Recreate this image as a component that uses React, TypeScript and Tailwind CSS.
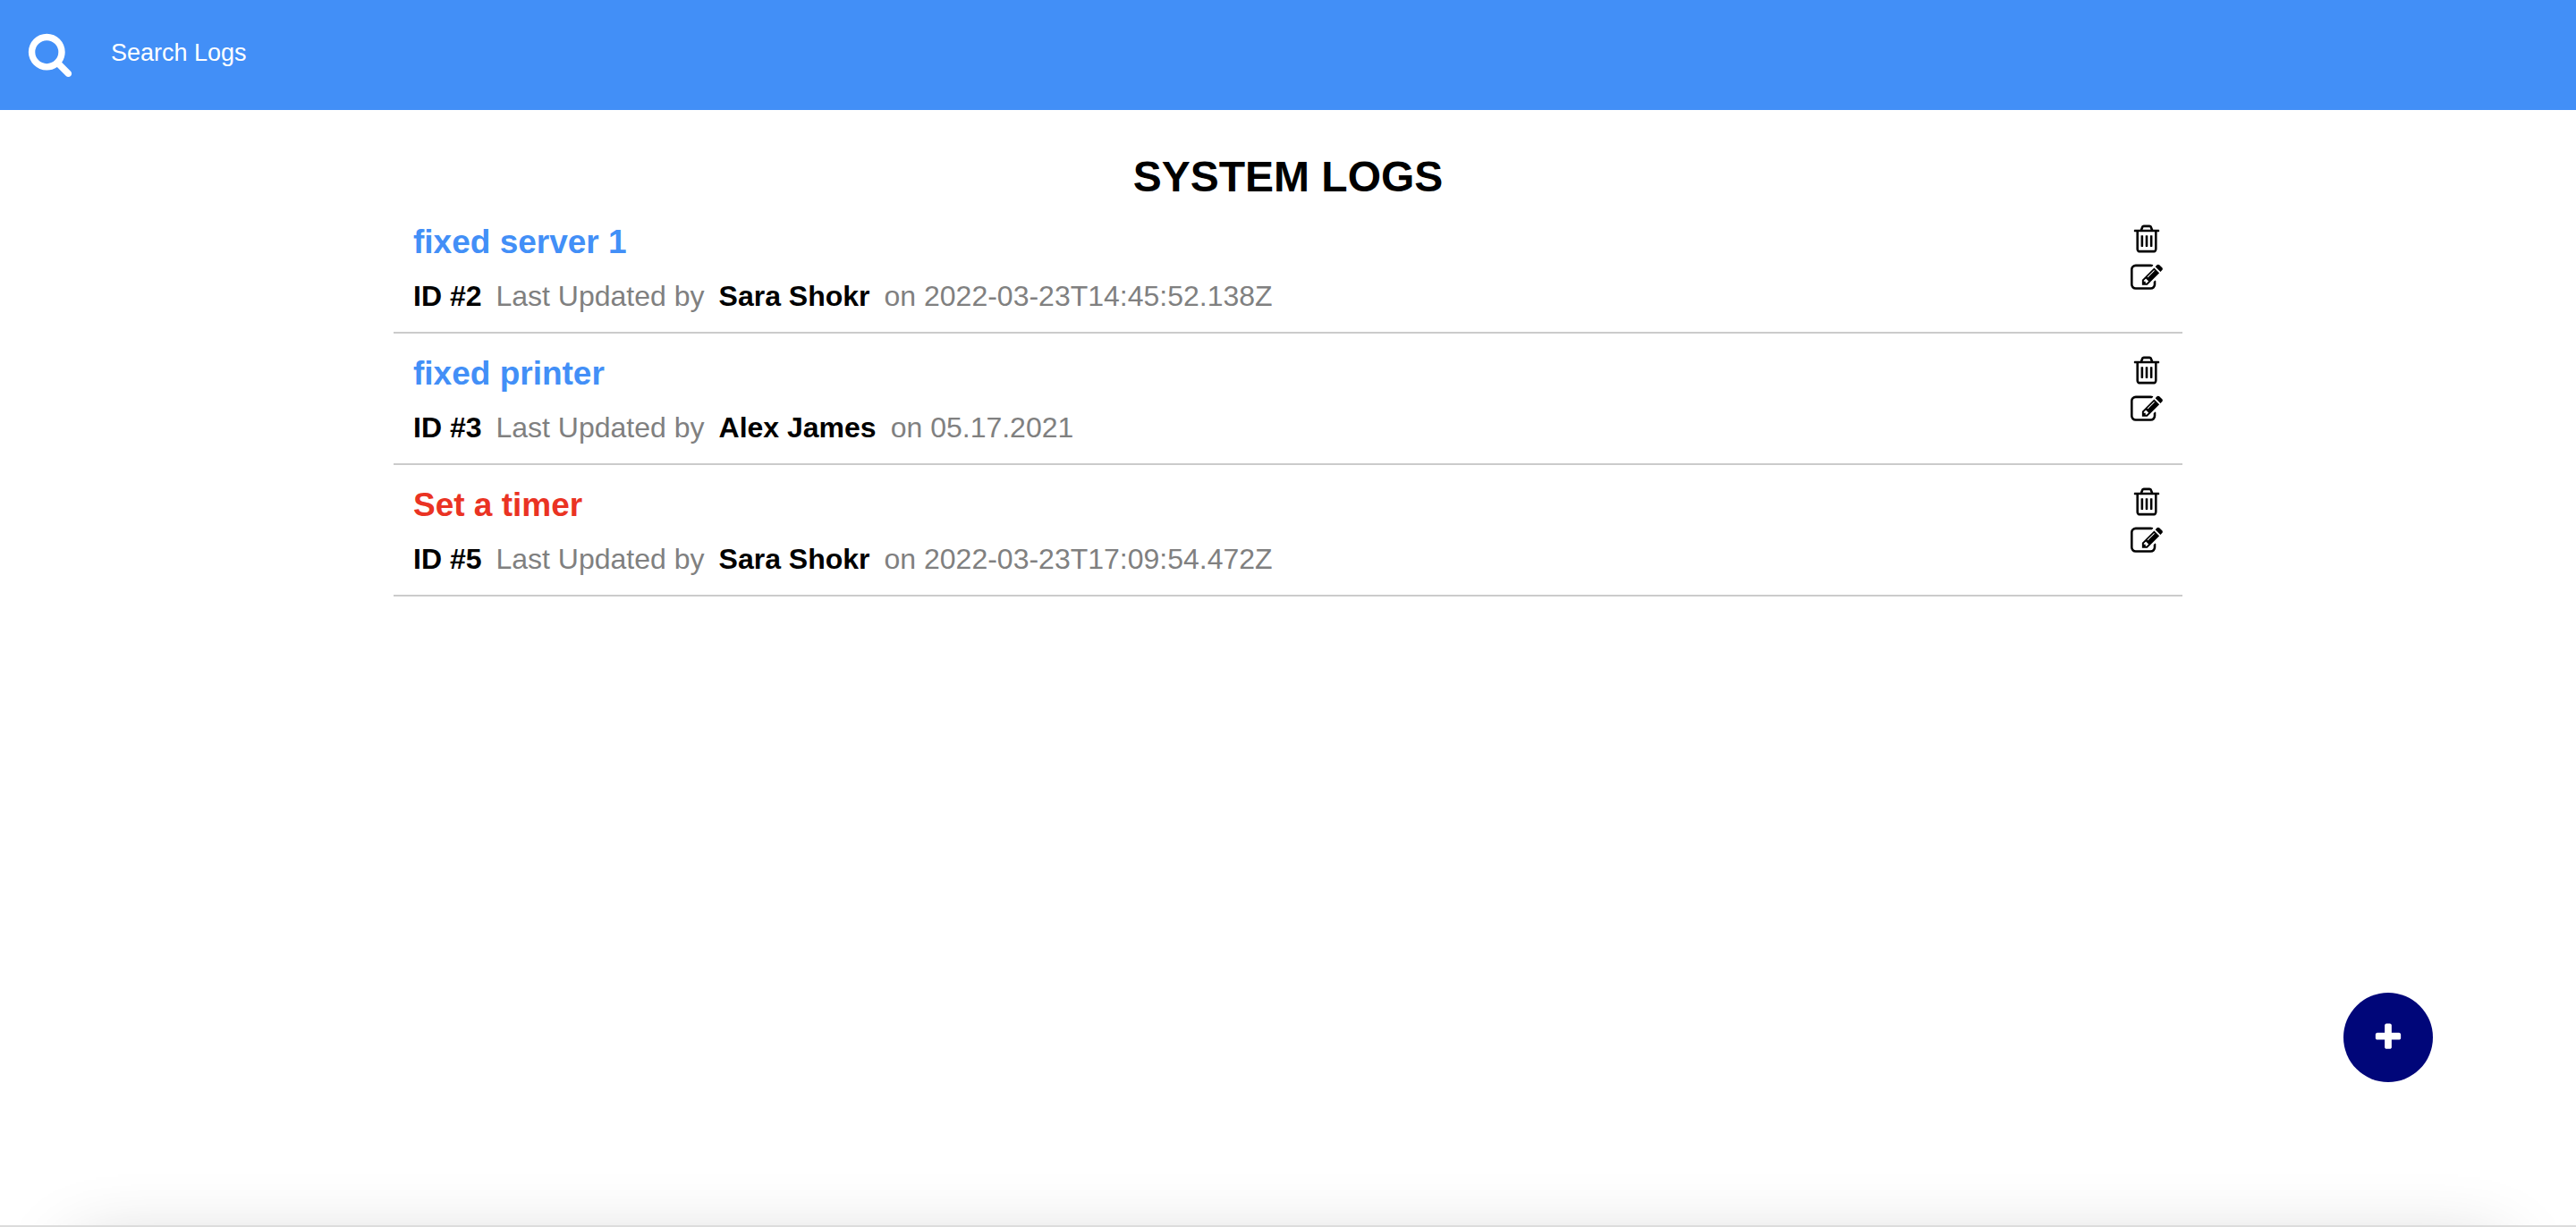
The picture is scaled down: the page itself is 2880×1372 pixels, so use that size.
type IconProps = { d: string; className: string };

const SEARCH =
  "M1216 832q0-185-131.5-316.5t-316.5-131.5-316.5 131.5-131.5 316.5 131.5 316.5 316.5 131.5 316.5-131.5 131.5-316.5zm512 832q0 52-38 90t-90 38q-54 0-90-38l-343-342q-179 124-399 124-143 0-273.5-55.5t-225-150-150-225-55.5-273.5 55.5-273.5 150-225 225-150 273.5-55.5 273.5 55.5 225 150 150 225 55.5 273.5q0 220-124 399l343 343q37 37 37 90z";
const TRASH =
  "M704 736v576q0 14-9 23t-23 9h-64q-14 0-23-9t-9-23v-576q0-14 9-23t23-9h64q14 0 23 9t9 23zm256 0v576q0 14-9 23t-23 9h-64q-14 0-23-9t-9-23v-576q0-14 9-23t23-9h64q14 0 23 9t9 23zm256 0v576q0 14-9 23t-23 9h-64q-14 0-23-9t-9-23v-576q0-14 9-23t23-9h64q14 0 23 9t9 23zm128 724v-948h-896v948q0 22 7 40.5t14.5 27 10.5 8.5h832q3 0 10.5-8.5t14.5-27 7-40.5zm-672-1076h448l-48-117q-7-9-17-11h-317q-10 2-17 11zm928 32v64q0 14-9 23t-23 9h-96v948q0 83-47 143.5t-113 60.5h-832q-66 0-113-58.5t-47-141.5v-952h-96q-14 0-23-9t-9-23v-64q0-14 9-23t23-9h309l70-167q15-37 54-63t79-26h320q40 0 79 26t54 63l70 167h309q14 0 23 9t9 23z";
const EDIT =
  "M888 1184l116-116-152-152-116 116v56h96v96h56zm440-720q-16-16-33 1l-350 350q-17 17-1 33t33-1l350-350q17-17 1-33zm80 594v190q0 119-84.5 203.5t-203.5 84.5h-832q-119 0-203.5-84.5t-84.5-203.5v-832q0-119 84.5-203.5t203.5-84.5h832q63 0 117 25 15 7 18 23 3 17-9 29l-49 49q-14 14-32 8-23-6-45-6h-832q-66 0-113 47t-47 113v832q0 66 47 113t113 47h832q66 0 113-47t47-113v-126q0-13 9-22l64-64q15-15 35-7t20 29zm-96-738l288 288-672 672h-288v-288zm444 132l-92 92-288-288 92-92q28-28 68-28t68 28l152 152q28 28 28 68t-28 68z";
const PLUS =
  "M1600 736v192q0 40-28 68t-68 28h-416v416q0 40-28 68t-68 28h-192q-40 0-68-28t-28-68v-416h-416q-40 0-68-28t-28-68v-192q0-40 28-68t68-28h416v-416q0-40 28-68t68-28h192q40 0 68 28t28 68v416h416q40 0 68 28t28 68z";

function Icon({ d, className }: IconProps) {
  return (
    <svg viewBox="0 0 1792 1792" fill="currentColor" aria-hidden="true" className={className}>
      <path d={d} />
    </svg>
  );
}

type Log = { id: number; message: string; tech: string; date: string; attention: boolean };

const logs: Log[] = [
  { id: 2, message: "fixed server 1", tech: "Sara Shokr", date: "2022-03-23T14:45:52.138Z", attention: false },
  { id: 3, message: "fixed printer", tech: "Alex James", date: "05.17.2021", attention: false },
  { id: 5, message: "Set a timer", tech: "Sara Shokr", date: "2022-03-23T17:09:54.472Z", attention: true },
];

function LogItem({ log }: { log: Log }) {
  return (
    <li className="flex items-start justify-between border-b-2 border-[#cbcbcb] px-[22px] pt-[21px] pb-5">
      <div>
        <h2 className={`text-[37px] leading-[48px] font-bold ${log.attention ? "text-[#ea3323]" : "text-[#428ff7]"}`}>
          {log.message}
        </h2>
        <p className="mt-4 flex gap-4 text-[32px] leading-10 text-[#808080]">
          <b className="text-black">ID #{log.id}</b>
          <span>Last Updated by</span>
          <b className="text-black">{log.tech}</b>
          <span>on {log.date}</span>
        </p>
      </div>
      <div className="flex flex-col gap-2 pt-0.5">
        <button type="button" aria-label={`Delete log ${log.id}`}>
          <Icon d={TRASH} className="size-9" />
        </button>
        <button type="button" aria-label={`Edit log ${log.id}`}>
          <Icon d={EDIT} className="size-9" />
        </button>
      </div>
    </li>
  );
}

export default function App() {
  return (
    <div className="min-h-screen bg-white font-['Liberation_Sans',Arial,sans-serif] text-black">
      <header className="flex h-[123px] items-center bg-[#428ff7] px-[30px] pb-1 text-white">
        <label htmlFor="search" aria-label="Search Logs">
          <Icon d={SEARCH} className="size-[52px]" />
        </label>
        <input
          id="search"
          type="text"
          placeholder="Search Logs"
          className="ml-[42px] h-20 flex-1 bg-transparent text-[27px] outline-none placeholder:text-white"
        />
      </header>

      <main className="mx-auto max-w-[2000px] pt-12">
        <h1 className="pb-px text-center text-5xl leading-[54px] font-bold">SYSTEM LOGS</h1>
        <ul>
          {logs.map((log) => (
            <LogItem key={log.id} log={log} />
          ))}
        </ul>
      </main>

      <button
        type="button"
        aria-label="Add log"
        className="fixed right-40 bottom-[162px] flex size-[100px] items-center justify-center rounded-full bg-[#000679] text-white"
      >
        <Icon d={PLUS} className="size-9" />
      </button>

      <div className="pointer-events-none fixed inset-x-0 bottom-0 h-20 overflow-hidden pt-[78px]">
        <div className="h-[600px] bg-[#dcdcdc] shadow-[0_-55px_80px_-85px_rgba(0,0,0,0.24)]" />
      </div>
    </div>
  );
}
